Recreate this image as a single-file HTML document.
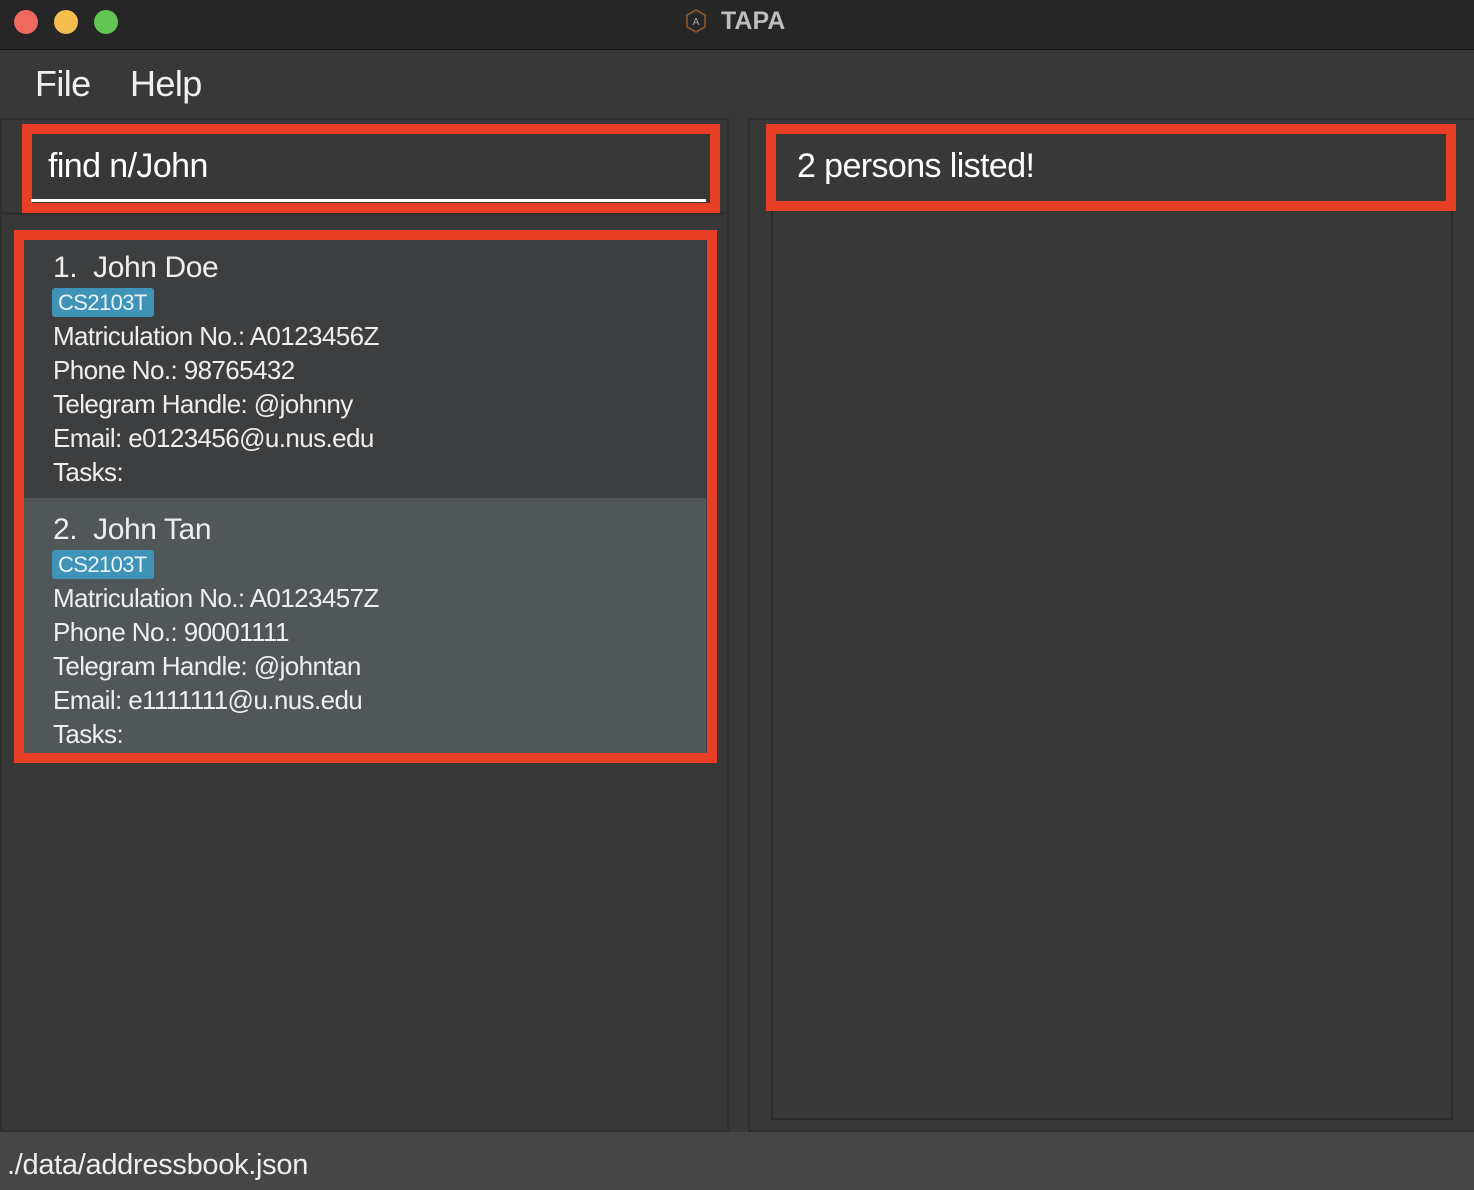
<!DOCTYPE html>
<html><head><style>
*{margin:0;padding:0;box-sizing:border-box}
body{width:1474px;height:1190px;background:#383838;position:relative;overflow:hidden;font-family:"Liberation Sans",sans-serif;color:#f0f0f0}
.a{position:absolute}
.t{white-space:nowrap;letter-spacing:-0.6px}
.ln{position:absolute;left:53px;font-size:26px;white-space:nowrap;letter-spacing:-0.6px;color:#eee}
.tag{position:absolute;left:52px;width:102px;height:29px;background:#3e93b6;border-radius:3px;font-size:22px;color:#eaf2f6;padding:2px 0 0 6px;letter-spacing:-0.6px}
.nm{position:absolute;left:53px;font-size:30px;letter-spacing:-0.4px;color:#eee}
</style></head><body>
<div class="a" style="left:0;top:0;width:1474px;height:50px;background:#262626;border-bottom:1px solid #111"></div>
<div class="a" style="left:14px;top:10px;width:24px;height:24px;border-radius:50%;background:#ee6a5f"></div>
<div class="a" style="left:54px;top:10px;width:24px;height:24px;border-radius:50%;background:#f5be4f"></div>
<div class="a" style="left:94px;top:10px;width:24px;height:24px;border-radius:50%;background:#62c554"></div>
<svg class="a" style="left:684px;top:8px" width="24" height="26" viewBox="0 0 24 26"><polygon points="12,2 21,7 21,19 12,24 3,19 3,7" fill="none" stroke="#8a5a2e" stroke-width="1.6"/><text x="12" y="17" font-size="10" fill="#aaa" text-anchor="middle" font-family="Liberation Sans">A</text></svg>
<div class="a t" style="left:721px;top:7px;font-size:25px;font-weight:bold;color:#bdbdbd;letter-spacing:0">TAPA</div>
<div class="a t" style="left:35px;top:63px;font-size:36px;color:#f0f0f0">File</div>
<div class="a t" style="left:130px;top:63px;font-size:36px;color:#f0f0f0">Help</div>
<div class="a" style="left:0;top:118px;width:729px;height:1014px;background:#383838;border:2px solid #2e2e2e"></div>
<div class="a" style="left:2px;top:212px;width:724px;height:3px;background:#2e2e2e"></div>
<div class="a" style="left:22px;top:124px;width:698px;height:89px;border:10px solid #e83e25;background:#383838"></div>
<div class="a t" style="left:48px;top:147px;font-size:34px;color:#fff">find n/John</div>
<div class="a" style="left:31px;top:199px;width:675px;height:3px;background:#fff"></div>
<div class="a" style="left:14px;top:230px;width:703px;height:533px;border:10px solid #e83e25;background:#3c3e3f"></div>
<div class="a" style="left:24px;top:498px;width:682px;height:255px;background:#515658"></div>
<div class="nm" style="top:251px">1.&nbsp; John Doe</div>
<div class="tag" style="top:288px">CS2103T</div>
<div class="ln" style="top:321px">Matriculation No.: A0123456Z</div>
<div class="ln" style="top:355px">Phone No.: 98765432</div>
<div class="ln" style="top:389px">Telegram Handle: @johnny</div>
<div class="ln" style="top:423px">Email: e0123456@u.nus.edu</div>
<div class="ln" style="top:457px">Tasks:</div>
<div class="nm" style="top:513px">2.&nbsp; John Tan</div>
<div class="tag" style="top:550px">CS2103T</div>
<div class="ln" style="top:583px">Matriculation No.: A0123457Z</div>
<div class="ln" style="top:617px">Phone No.: 90001111</div>
<div class="ln" style="top:651px">Telegram Handle: @johntan</div>
<div class="ln" style="top:685px">Email: e1111111@u.nus.edu</div>
<div class="ln" style="top:719px">Tasks:</div>
<div class="a" style="left:748px;top:118px;width:726px;height:1014px;border:2px solid #2e2e2e;border-right:none"></div>
<div class="a" style="left:771px;top:205px;width:682px;height:915px;border:2px solid #2c2c2c"></div>
<div class="a" style="left:766px;top:124px;width:690px;height:87px;border:10px solid #e83e25;background:#383838"></div>
<div class="a t" style="left:797px;top:147px;font-size:34px;color:#fff">2 persons listed!</div>
<div class="a" style="left:0;top:1132px;width:1474px;height:58px;background:#464646"></div>
<div class="a t" style="left:7px;top:1149px;font-size:29px;color:#eee;letter-spacing:-0.3px">./data/addressbook.json</div>
</body></html>
